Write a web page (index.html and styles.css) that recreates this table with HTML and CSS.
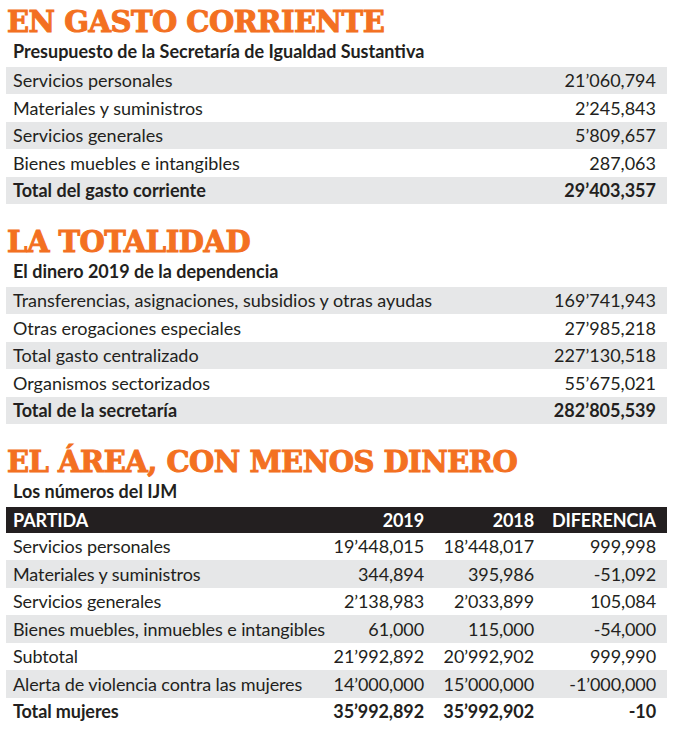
FILE: index.html
```html
<!DOCTYPE html>
<html lang="es">
<head>
<meta charset="utf-8">
<title>Presupuesto Secretaría de Igualdad Sustantiva</title>
<link rel="stylesheet" href="styles.css">
</head>
<body>
<main class="page">
  <section class="block block-first">
    <h2 class="title">EN GASTO CORRIENTE</h2>
    <p class="subtitle">Presupuesto de la Secretaría de Igualdad Sustantiva</p>
    <div class="table two">
      <div class="row shade"><span>Servicios personales</span><span class="num">21’060,794</span></div>
      <div class="row"><span>Materiales y suministros</span><span class="num">2’245,843</span></div>
      <div class="row shade"><span>Servicios generales</span><span class="num">5’809,657</span></div>
      <div class="row"><span>Bienes muebles e intangibles</span><span class="num">287,063</span></div>
      <div class="row shade total"><span>Total del gasto corriente</span><span class="num">29’403,357</span></div>
    </div>
  </section>

  <section class="block">
    <h2 class="title">LA TOTALIDAD</h2>
    <p class="subtitle">El dinero 2019 de la dependencia</p>
    <div class="table two">
      <div class="row shade"><span>Transferencias, asignaciones, subsidios y otras ayudas</span><span class="num">169’741,943</span></div>
      <div class="row"><span>Otras erogaciones especiales</span><span class="num">27’985,218</span></div>
      <div class="row shade"><span>Total gasto centralizado</span><span class="num">227’130,518</span></div>
      <div class="row"><span>Organismos sectorizados</span><span class="num">55’675,021</span></div>
      <div class="row shade total"><span>Total de la secretaría</span><span class="num">282’805,539</span></div>
    </div>
  </section>

  <section class="block">
    <h2 class="title">EL ÁREA, CON MENOS DINERO</h2>
    <p class="subtitle">Los números del IJM</p>
    <div class="table four">
      <div class="row head"><span>PARTIDA</span><span class="num">2019</span><span class="num">2018</span><span class="num">DIFERENCIA</span></div>
      <div class="row"><span>Servicios personales</span><span class="num">19’448,015</span><span class="num">18’448,017</span><span class="num">999,998</span></div>
      <div class="row shade"><span>Materiales y suministros</span><span class="num">344,894</span><span class="num">395,986</span><span class="num">-51,092</span></div>
      <div class="row"><span>Servicios generales</span><span class="num">2’138,983</span><span class="num">2’033,899</span><span class="num">105,084</span></div>
      <div class="row shade"><span>Bienes muebles, inmuebles e intangibles</span><span class="num">61,000</span><span class="num">115,000</span><span class="num">-54,000</span></div>
      <div class="row"><span>Subtotal</span><span class="num">21’992,892</span><span class="num">20’992,902</span><span class="num">999,990</span></div>
      <div class="row shade"><span>Alerta de violencia contra las mujeres</span><span class="num">14’000,000</span><span class="num">15’000,000</span><span class="num">-1’000,000</span></div>
      <div class="row total"><span>Total mujeres</span><span class="num">35’992,892</span><span class="num">35’992,902</span><span class="num">-10</span></div>
    </div>
  </section>
</main>
</body>
</html>
```

FILE: styles.css
```css
* {
  box-sizing: border-box;
}

html, body {
  margin: 0;
  padding: 0;
  background: #ffffff;
}

body {
  font-family: Lato, "Open Sans", sans-serif;
  color: #231f20;
}

.page {
  width: 661px;
  margin-left: 6px;
  padding-top: 7px;
}

.block {
  margin-top: 23px;
}

.block-first {
  margin-top: 0;
}

.title {
  margin: 0;
  padding-left: 1px;
  font-family: "DejaVu Serif", serif;
  font-weight: 700;
  font-size: 29px;
  line-height: 30px;
  color: #f37021;
  -webkit-text-stroke: 1px #f37021;
  letter-spacing: -0.5px;
}

.subtitle {
  margin: 0;
  padding-left: 7px;
  font-weight: 700;
  font-size: 18px;
  line-height: 29.5px;
  letter-spacing: 0;
}

.table {
  display: flex;
  flex-direction: column;
}

.row {
  display: grid;
  align-items: center;
  height: 27.5px;
  padding: 0 11px 0 7px;
  font-size: 18px;
  line-height: 20px;
  white-space: nowrap;
}

.two .row {
  grid-template-columns: minmax(0, 1fr) auto;
}

.four .row {
  grid-template-columns: minmax(0, 1fr) 100px 110px 122px;
  letter-spacing: -0.1px;
}

.shade {
  background: #e6e7e8;
}

.total {
  font-weight: 700;
}

.head {
  background: #231f20;
  color: #ffffff;
  font-weight: 700;
  height: 26px;
}

.num {
  text-align: right;
}
```
